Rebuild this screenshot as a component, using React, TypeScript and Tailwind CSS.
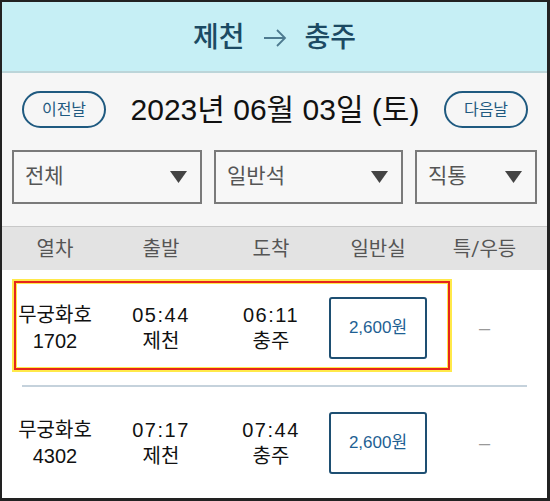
const font = { fontFamily: '"Roboto", "Noto Sans CJK KR", sans-serif' };
const rowFont = { fontFamily: '"Liberation Sans", "Noto Sans CJK KR", sans-serif' };

const trains = [
  { name: "무궁화호", no: "1702", dep: "05:44", arr: "06:11", price: "2,600원", selected: true },
  { name: "무궁화호", no: "4302", dep: "07:17", arr: "07:44", price: "2,600원", selected: false },
];

const Caret = () => (
  <svg width="17" height="12" viewBox="0 0 17 12">
    <path d="M0 0 H17 L8.5 12 Z" fill="#444" />
  </svg>
);

const Select = ({ label, width }: { label: string; width: string }) => (
  <div className={`${width} h-[54px] border-2 border-[#7a7a7a] bg-[#f7f7f7] flex items-center justify-between pl-[11px] pr-[13px]`}>
    <span className="text-[21px] text-[#555]">{label}</span>
    <Caret />
  </div>
);

const App = () => {
  return (
    <div
      className="w-[550px] h-[501px] overflow-hidden bg-white border-l-2 border-t-2 border-r-[3px] border-b-[3px] border-[#222] flex flex-col"
      style={font}
    >
      {/* Route header */}
      <div className="h-[71px] shrink-0 bg-[#c6eff5] border-b-2 border-[#bcd5d9] flex items-center justify-center gap-[16px] pt-[2px]">
        <span className="text-[28px] font-medium text-[#1b4a63]">제천</span>
        <svg width="24" height="20" viewBox="0 0 24 20" className="mx-[2px]">
          <path d="M1 10 H22 M14 2 L22 10 L14 18" fill="none" stroke="#4d7a8f" strokeWidth="1.8" />
        </svg>
        <span className="text-[28px] font-medium text-[#1b4a63]">충주</span>
      </div>

      {/* Date + filters */}
      <div className="bg-[#f6f6f6] pt-[18px] pb-[22px] px-[10px]">
        <div className="h-[37px] flex items-center justify-between pl-[10px] pr-[9px]">
          <button className="w-[84px] h-[37px] rounded-full border-2 border-[#1f5a80] text-[16px] text-[#1f5a80]">이전날</button>
          <span className="text-[30px] leading-none text-[#111]" style={rowFont}>2023년 06월 03일 (토)</span>
          <button className="w-[84px] h-[37px] rounded-full border-2 border-[#1f5a80] text-[16px] text-[#1f5a80]">다음날</button>
        </div>
        <div className="flex justify-between mt-[22px]">
          <Select label="전체" width="w-[190px]" />
          <Select label="일반석" width="w-[189px]" />
          <Select label="직통" width="w-[122px]" />
        </div>
      </div>

      {/* Column header */}
      <div className="h-[44px] shrink-0 bg-[#e3e3e3] border-t border-[#c8c8c8] grid grid-cols-[106px_106px_114px_100px_1fr] items-center text-[20px] text-[#555] text-center">
        <span>열차</span>
        <span>출발</span>
        <span>도착</span>
        <span>일반실</span>
        <span className="pr-[6px]">특/우등</span>
      </div>

      {/* Train rows */}
      {trains.map((t, i) => (
        <div key={t.no} style={rowFont}>
          {i > 0 && <div className="mx-[20px] h-[2px] bg-[#c5d2dc]" />}
          <div className={`relative grid grid-cols-[106px_106px_114px_100px_1fr] items-center text-center text-[20px] text-[#111] leading-[26px] ${i === 0 ? "h-[115px]" : "h-[111px]"}`}>
            {t.selected && (
              <div className="absolute left-[12px] top-[11px] w-[436px] h-[89px] border-2 border-[#e5251b] shadow-[0_0_0_2px_#ffe94a,inset_0_0_0_1px_#ffe94a] pointer-events-none" />
            )}
            <div>
              <div>{t.name}</div>
              <div>{t.no}</div>
            </div>
            <div>
              <div className="tracking-[1.5px]">{t.dep}</div>
              <div>제천</div>
            </div>
            <div>
              <div className="tracking-[1.5px]">{t.arr}</div>
              <div>충주</div>
            </div>
            <div className="flex justify-center">
              <button className="w-[98px] h-[62px] rounded-[3px] border-2 border-[#1e4f72] bg-white text-[17px] text-[#1e5f93]">
                {t.price}
              </button>
            </div>
            <div className="text-[#999] pr-[6px]">–</div>
          </div>
        </div>
      ))}
    </div>
  );
};

export default App;
